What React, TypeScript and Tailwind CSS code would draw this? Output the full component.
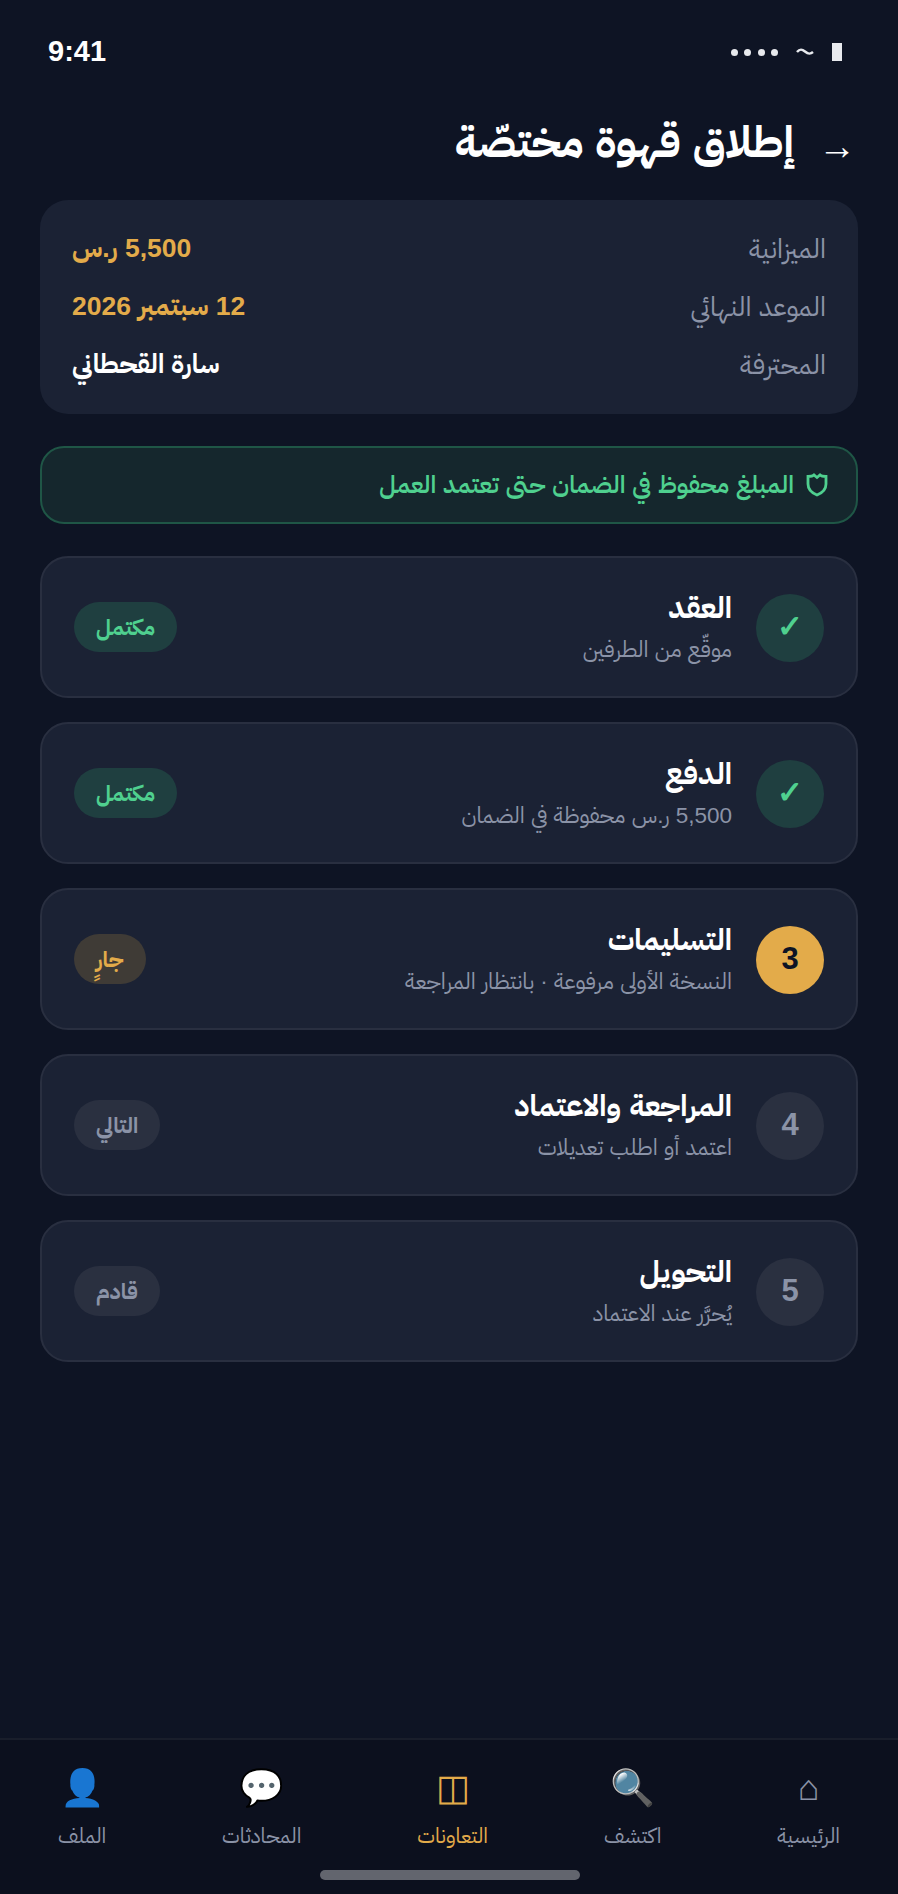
const steps = [
  { num: "✓", title: "العقد", sub: "موقّع من الطرفين", badge: "مكتمل", state: "done" },
  { num: "✓", title: "الدفع", sub: "5,500 ر.س محفوظة في الضمان", badge: "مكتمل", state: "done" },
  { num: "3", title: "التسليمات", sub: "النسخة الأولى مرفوعة · بانتظار المراجعة", badge: "جارٍ", state: "active" },
  { num: "4", title: "المراجعة والاعتماد", sub: "اعتمد أو اطلب تعديلات", badge: "التالي", state: "todo" },
  { num: "5", title: "التحويل", sub: "يُحرَّر عند الاعتماد", badge: "قادم", state: "todo" },
];

const tabs = [
  { icon: "⌂", label: "الرئيسية" },
  { icon: "🔍", label: "اكتشف" },
  { icon: "◫", label: "التعاونات", active: true },
  { icon: "💬", label: "المحادثات" },
  { icon: "👤", label: "الملف" },
];

function SummaryRow({ label, value, gold }: { label: string; value: string; gold?: boolean }) {
  return (
    <div className="flex items-center justify-between h-[58px]">
      <span className="text-[27px] text-[#8b93a7]">{label}</span>
      <span className={`text-[26.500px] font-bold ${gold ? "text-[#e3ab4a]" : "text-white"}`}>{value}</span>
    </div>
  );
}

function StepCard({ step }: { step: (typeof steps)[number] }) {
  const circle =
    step.state === "done"
      ? "bg-[#1f3f40] text-[#4fd08f]"
      : step.state === "active"
        ? "bg-[#e3ab4a] text-[#0e1424]"
        : "bg-[#2a3040] text-[#8b93a7]";
  const pill =
    step.state === "done"
      ? "bg-[#1f3f40] text-[#4fd08f]"
      : step.state === "active"
        ? "bg-[#3f3b36] text-[#e3ab4a]"
        : "bg-[#2a3040] text-[#8b93a7]";
  return (
    <div className="flex items-center h-[142px] px-[32px] gap-[24px] rounded-[28px] bg-[#1b2234] border-2 border-[#292f40]">
      <div className={`w-[68px] h-[68px] mt-[1px] rounded-full flex items-center justify-center text-[31px] font-bold font-['Liberation_Sans',sans-serif] ${circle}`}>
        {step.num}
      </div>
      <div className="flex-1 flex flex-col gap-[4px] pt-[2px]">
        <div className="text-[30px] font-bold text-white leading-[40px]">{step.title}</div>
        <div className="text-[22.500px] text-[#8b93a7] leading-[36px]">{step.sub}</div>
      </div>
      <div className={`h-[50px] px-[22px] rounded-full flex items-center text-[22px] font-bold ${pill}`}>
        {step.badge}
      </div>
    </div>
  );
}

export default function App() {
  return (
    <div
      dir="rtl"
      className="relative w-[898px] h-[1894px] bg-[#0e1424] overflow-hidden flex flex-col"
      style={{ fontFamily: '"Liberation Sans", "IBM Plex Sans Arabic", sans-serif' }}
    >
      {/* Status bar */}
      <div className="flex items-center justify-between h-[100px] pt-[4px] pl-[48px] pr-[56px] text-white" dir="ltr">
        <span className="text-[29px] font-bold">9:41</span>
        <div className="flex items-center gap-[18px]">
          <div className="flex gap-[6.500px]">
            <span className="w-[7px] h-[7px] rounded-full bg-[#e8eaee]" />
            <span className="w-[7px] h-[7px] rounded-full bg-[#e8eaee]" />
            <span className="w-[7px] h-[7px] rounded-full bg-[#e8eaee]" />
            <span className="w-[7px] h-[7px] rounded-full bg-[#e8eaee]" />
          </div>
          <svg width="18" height="8" viewBox="0 0 18 8">
            <path d="M1 4C4 0.500 6 1 9 3.500C12 6 14 6.500 17 4" fill="none" stroke="#e8eaee" strokeWidth="2.500" />
          </svg>
          <span className="w-[10px] h-[18px] bg-[#e8eaee]" />
        </div>
      </div>

      {/* Header */}
      <div className="flex items-center gap-[24px] h-[90px] pr-[42px] pl-[40px] pb-[4px] text-white">
        <span className="text-[38px] leading-none relative top-[3px]">→</span>
        <h1 className="text-[43.500px] font-bold">إطلاق قهوة مختصّة</h1>
      </div>

      <div className="px-[40px] pt-[10px] flex flex-col">
        {/* Summary */}
        <div className="rounded-[28px] bg-[#1b2234] px-[32px] py-[20px]">
          <SummaryRow label="الميزانية" value="5,500 ر.س" gold />
          <SummaryRow label="الموعد النهائي" value="12 سبتمبر 2026" gold />
          <SummaryRow label="المحترفة" value="سارة القحطاني" />
        </div>

        {/* Escrow banner */}
        <div className="mt-[32px] h-[78px] rounded-[24px] bg-[#15272d] border-2 border-[#1f5646] px-[28px] flex items-center gap-[12px] text-[#4fd08f] text-[24.600px] font-semibold">
          <svg width="22" height="24" viewBox="0 0 22 24" fill="none" stroke="currentColor" strokeWidth="2.800" className="shrink-0">
            <path d="M2 3.500C4.500 3.500 6.500 3.500 8 2L11 4.500L14 2C15.500 3.500 17.500 3.500 20 3.500V11C20 16 16 20 11 22C6 20 2 16 2 11Z" />
          </svg>
          <span className="pt-[1px]">المبلغ محفوظ في الضمان حتى تعتمد العمل</span>
        </div>

        {/* Steps */}
        <div className="mt-[32px] flex flex-col gap-[24px]">
          {steps.map((s) => (
            <StepCard key={s.title} step={s} />
          ))}
        </div>
      </div>

      {/* Tab bar */}
      <div className="absolute bottom-0 left-0 right-0 h-[156px] bg-[#0c101e] border-t-2 border-[#191e2b]">
        <div className="flex justify-between pt-[26px] px-[58px]">
          {tabs.map((t) => (
            <div key={t.label} className="flex flex-col items-center gap-[10px]">
              <span className={`text-[36px] leading-[44px] ${t.active ? "text-[#e3ab4a]" : "text-[#8b93a7]"}`}>{t.icon}</span>
              <span className={`text-[21px] ${t.active ? "text-[#e3ab4a]" : "text-[#8b93a7]"}`}>{t.label}</span>
            </div>
          ))}
        </div>
        <div className="absolute bottom-[14px] left-[320px] w-[260px] h-[10px] rounded-full bg-[#62656e]" />
      </div>
    </div>
  );
}
